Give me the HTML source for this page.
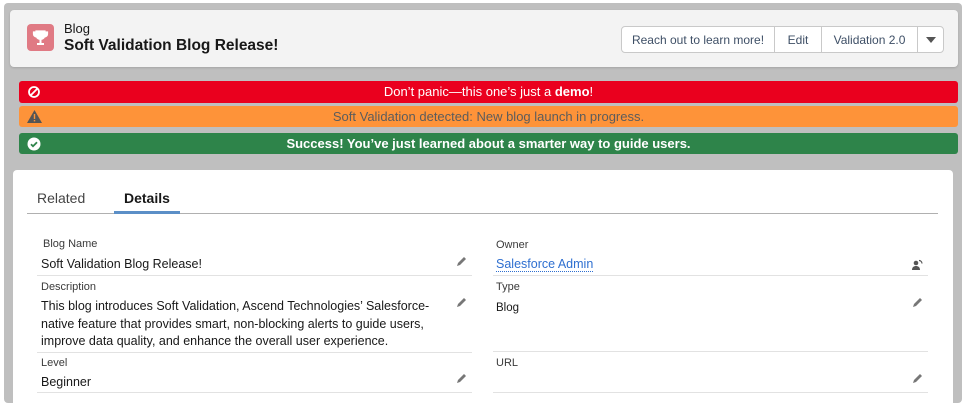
<!DOCTYPE html>
<html><head><meta charset="utf-8"><style>
*{box-sizing:border-box;margin:0;padding:0}
body{width:965px;height:401px;background:#fff;font-family:"Liberation Sans",Arial,sans-serif;position:relative;overflow:hidden;color:#181818}
.frame{position:absolute;left:4px;top:3px;width:958px;height:400px;background:#bfbfbf;border-radius:4px}
.hdr{position:absolute;left:10px;top:10px;width:948px;height:57px;background:#f3f3f3;border-radius:4px;box-shadow:0 1px 2px rgba(0,0,0,.15)}
.ic{position:absolute;left:27px;top:24px;width:27px;height:27px;background:#e07a84;border-radius:4px}
.t1{position:absolute;left:64px;top:21px;font-size:13px}
.t2{position:absolute;left:64px;top:37px;font-size:15.5px;font-weight:bold}
.btns{position:absolute;left:621px;top:26px;height:27px;display:flex;border:1px solid #c9c9c9;border-radius:4px;background:#fff;font-size:12px;color:#3e4f66}
.btns div{display:flex;align-items:center;justify-content:center;border-right:1px solid #c9c9c9;height:100%}
.btns div:last-child{border-right:none}
.ban{position:absolute;left:19px;width:939px;border-radius:3px;text-align:center;font-size:13px;color:#fff}
.ban svg{position:absolute;left:8px}
.card{position:absolute;left:13px;top:170px;width:940px;height:240px;background:#fff;border-radius:4px}
.lbl{position:absolute;font-size:11px;color:#3a3a3a}
.val{position:absolute;font-size:12.5px;color:#181818}
.ln{position:absolute;height:1px;background:#e2e2e2}
.pen{position:absolute}
</style></head><body>
<div class="frame"></div>
<div class="hdr"></div>
<div class="ic"><svg width="27" height="27" viewBox="0 0 27 27"><path d="M9 7h9v4a4.5 4.5 0 0 1-9 0z M9 8H6.5v2a3 3 0 0 0 3 3 M18 8h2.5v2a3 3 0 0 1-3 3" fill="#fff" stroke="#fff" stroke-width="1.2"/><rect x="12.5" y="15" width="2" height="4" fill="#fff"/><rect x="10" y="19" width="7" height="2" fill="#fff"/></svg></div>
<div class="t1">Blog</div>
<div class="t2">Soft Validation Blog Release!</div>
<div class="btns"><div style="width:153px">Reach out to learn more!</div><div style="width:47px">Edit</div><div style="width:96px">Validation 2.0</div><div style="width:25px"><svg width="10" height="6"><path d="M0 0h10L5 6z" fill="#555"/></svg></div></div>

<div class="ban" style="top:81px;height:22px;line-height:22px;background:#ea001e"><svg style="top:4px" width="14" height="14" viewBox="0 0 14 14"><circle cx="7" cy="7" r="5" fill="none" stroke="#fff" stroke-width="1.8"/><path d="M3.5 10.5l7-7" stroke="#fff" stroke-width="1.8"/></svg>Don’t panic—this one’s just a <b>demo</b>!</div>
<div class="ban" style="top:106px;height:21px;line-height:21px;background:#fe9339;color:#5c5c5c"><svg style="top:4px" width="15" height="13" viewBox="0 0 15 13"><path d="M7.5 0L15 13H0z" fill="#555"/><rect x="6.8" y="4" width="1.4" height="5" fill="#fe9339"/><rect x="6.8" y="10" width="1.4" height="1.4" fill="#fe9339"/></svg>Soft Validation detected: New blog launch in progress.</div>
<div class="ban" style="top:133px;height:21px;line-height:21px;background:#2e844a;font-weight:bold"><svg style="top:4px" width="14" height="14" viewBox="0 0 14 14"><circle cx="7" cy="7" r="6.5" fill="#fff"/><path d="M4 7.2l2 2 4-4" fill="none" stroke="#2e844a" stroke-width="1.8"/></svg>Success! You’ve just learned about a smarter way to guide users.</div>

<div class="card"></div>
<div style="position:absolute;left:37px;top:190px;font-size:14px;color:#444">Related</div>
<div style="position:absolute;left:124px;top:190px;font-size:14px;font-weight:bold">Details</div>
<div style="position:absolute;left:27px;top:213px;width:911px;height:1px;background:#b0b0b0"></div>
<div style="position:absolute;left:114px;top:211px;width:66px;height:3px;background:#5b8fc7"></div>

<div class="lbl" style="left:43px;top:238px">Blog Name</div>
<div class="val" style="left:41px;top:257px">Soft Validation Blog Release!</div>
<div class="ln" style="left:37px;top:275px;width:435px"></div>
<div class="lbl" style="left:41px;top:281px">Description</div>
<div class="val" style="left:41px;top:298px;line-height:17.5px;width:410px">This blog introduces Soft Validation, Ascend Technologies’ Salesforce-native feature that provides smart, non-blocking alerts to guide users, improve data quality, and enhance the overall user experience.</div>
<div class="ln" style="left:37px;top:352px;width:435px"></div>
<div class="lbl" style="left:41px;top:357px">Level</div>
<div class="val" style="left:41px;top:375px">Beginner</div>
<div class="ln" style="left:37px;top:392px;width:435px"></div>

<div class="lbl" style="left:496px;top:239px">Owner</div>
<div class="val" style="left:496px;top:257px;color:#2e6fd0;border-bottom:1px dotted #2e6fd0">Salesforce Admin</div>
<div class="ln" style="left:493px;top:275px;width:435px"></div>
<div class="lbl" style="left:496px;top:281px">Type</div>
<div class="val" style="left:496px;top:302px;font-size:11.5px">Blog</div>
<div class="ln" style="left:493px;top:351px;width:435px"></div>
<div class="lbl" style="left:496px;top:357px">URL</div>
<div class="ln" style="left:493px;top:392px;width:435px"></div>

<svg class="pen" style="left:456px;top:255px" width="12" height="12" viewBox="0 0 12 12"><path d="M1 11l1-3 6-6 2 2-6 6z" fill="#777"/></svg>
<svg class="pen" style="left:456px;top:296px" width="12" height="12" viewBox="0 0 12 12"><path d="M1 11l1-3 6-6 2 2-6 6z" fill="#777"/></svg>
<svg class="pen" style="left:456px;top:372px" width="12" height="12" viewBox="0 0 12 12"><path d="M1 11l1-3 6-6 2 2-6 6z" fill="#777"/></svg>
<svg class="pen" style="left:912px;top:296px" width="12" height="12" viewBox="0 0 12 12"><path d="M1 11l1-3 6-6 2 2-6 6z" fill="#777"/></svg>
<svg class="pen" style="left:912px;top:372px" width="12" height="12" viewBox="0 0 12 12"><path d="M1 11l1-3 6-6 2 2-6 6z" fill="#777"/></svg>
<svg class="pen" style="left:911px;top:259px" width="13" height="12" viewBox="0 0 13 12"><circle cx="5" cy="4" r="2.3" fill="#555"/><path d="M1 11c0-3 2-4 4-4s4 1 4 4z" fill="#555"/><path d="M8 1.5a3 3 0 0 1 3 3" fill="none" stroke="#555" stroke-width="1.2"/></svg>
</body></html>
